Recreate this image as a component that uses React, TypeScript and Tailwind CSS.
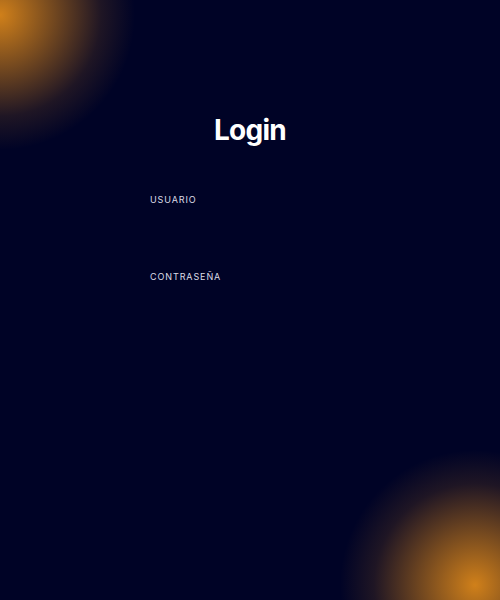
export default function App() {
  return (
    <div className="relative h-[600px] w-full overflow-hidden bg-[#000326] font-['Inter',sans-serif]">
      <div className="pointer-events-none absolute -left-[135px] -top-[120px] h-[270px] w-[270px] rounded-full bg-[radial-gradient(circle_closest-side,#d0801a_0%,rgba(208,128,26,0.55)_40%,rgba(208,128,26,0.15)_75%,rgba(0,3,38,0)_100%)]" />
      <div className="pointer-events-none absolute -bottom-[120px] -right-[110px] h-[270px] w-[270px] rounded-full bg-[radial-gradient(circle_closest-side,#d0801a_0%,rgba(208,128,26,0.55)_40%,rgba(208,128,26,0.15)_75%,rgba(0,3,38,0)_100%)]" />
      <form className="relative mx-auto flex w-[200px] flex-col pt-[112px]">
        <h1 className="text-center text-[28px] font-bold leading-9 tracking-tight text-white">Login</h1>
        <label className="mt-[44px] flex flex-col">
          <span className="text-[9px] uppercase leading-4 tracking-[0.1em] text-[#dcdce6]">Usuario</span>
          <input type="text" className="mt-1 h-[40px] w-full bg-transparent text-sm text-white outline-none" />
        </label>
        <label className="mt-[17px] flex flex-col">
          <span className="text-[9px] uppercase leading-4 tracking-[0.1em] text-[#dcdce6]">Contraseña</span>
          <input type="password" className="mt-1 h-[40px] w-full bg-transparent text-sm text-white outline-none" />
        </label>
      </form>
    </div>
  )
}
